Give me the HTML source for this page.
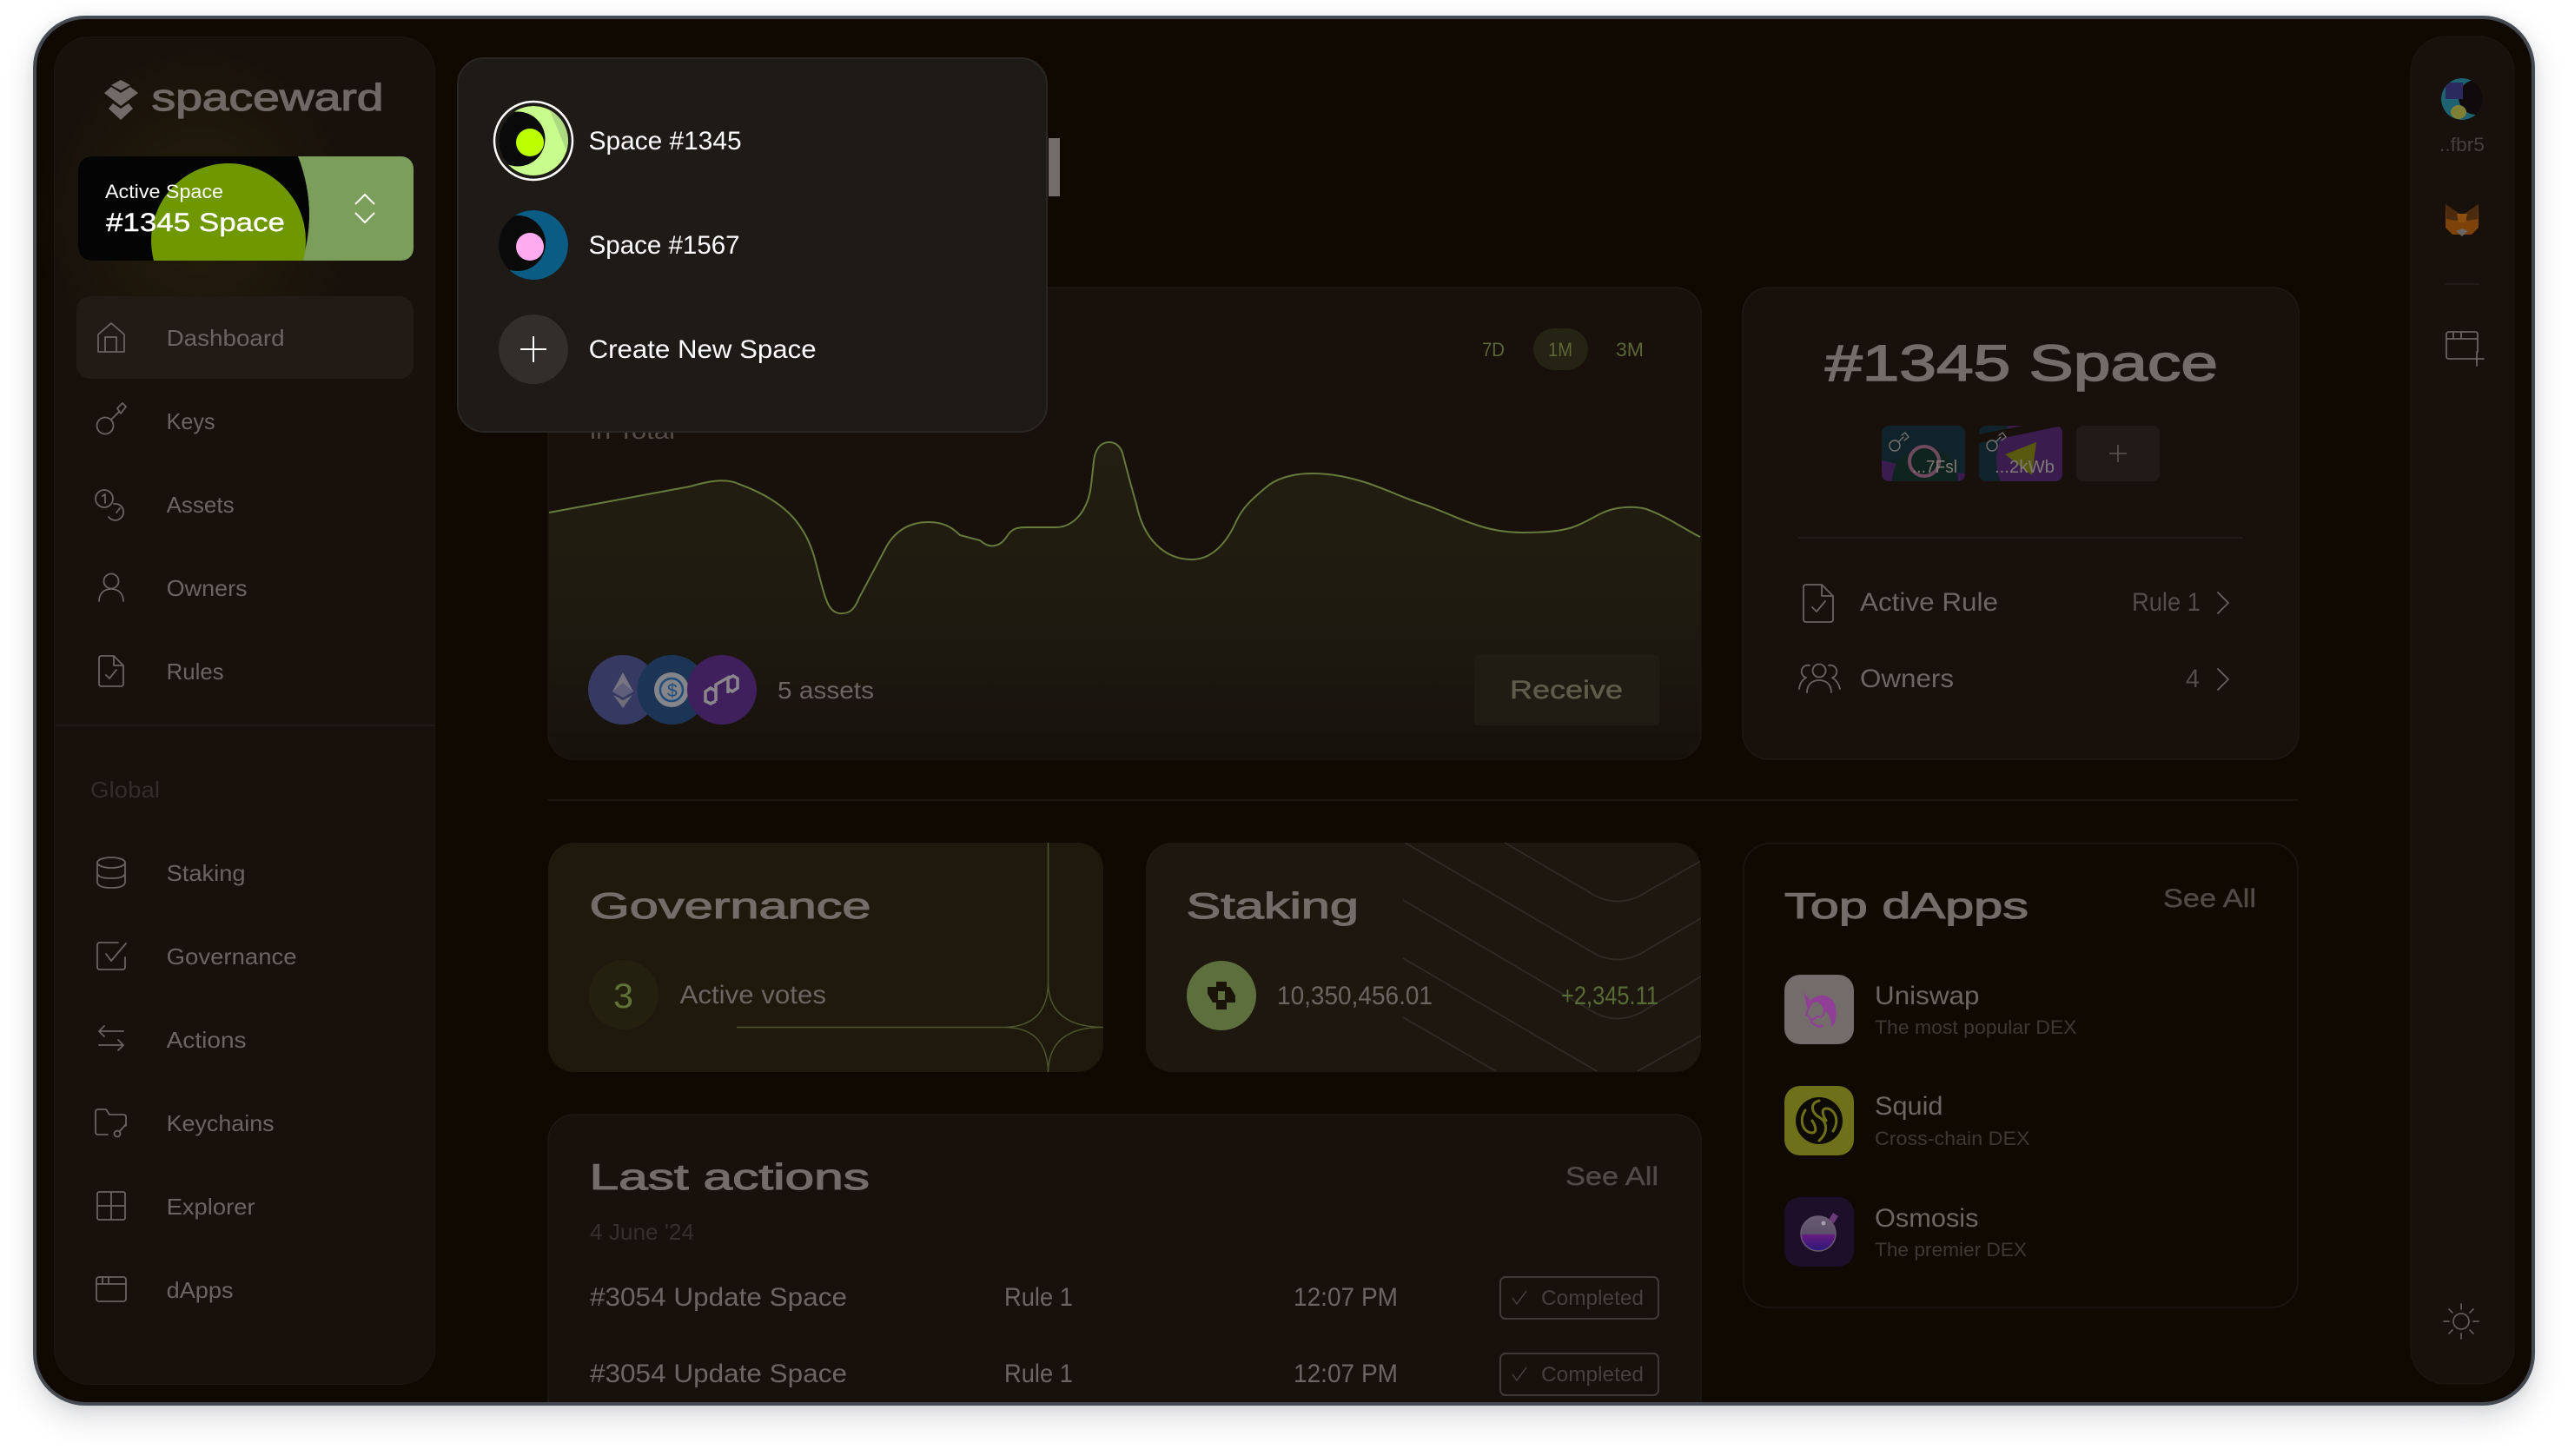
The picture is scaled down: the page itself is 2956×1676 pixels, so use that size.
<!DOCTYPE html>
<html lang="en"><head><meta charset="utf-8"><title>Spaceward</title>
<style>
html,body{margin:0;padding:0;background:#fff;width:2956px;height:1676px;overflow:hidden}
#sh{position:absolute;left:38px;top:18px;width:2880px;height:1600px;border-radius:60px;box-shadow:0 14px 34px rgba(30,35,45,.17),0 2px 12px rgba(30,40,60,.08)}
svg{position:absolute;left:0;top:0}
text{font-family:"Liberation Sans",sans-serif}
.n{font-size:26px;fill:#6b6461}
.b{font-size:30px;fill:#6c6562}
.h{font-size:42px;fill:#746c69;stroke:#746c69;stroke-width:1.1px}
.sa{font-size:30px;fill:#504a46}
.s{font-size:22px;fill:#3e3834}
.d{font-size:30px;fill:#fff}
.i{fill:none;stroke:#6a6360;stroke-width:1.8;stroke-linecap:round;stroke-linejoin:round}
.i2{fill:none;stroke:#5f5855;stroke-width:1.8;stroke-linecap:round;stroke-linejoin:round}
</style></head><body>
<div id="sh"></div>
<svg width="2956" height="1676" viewBox="0 0 2956 1676" xmlns="http://www.w3.org/2000/svg">
<defs>
<clipPath id="fr"><rect x="42" y="22" width="2872" height="1592" rx="56"/></clipPath>
<clipPath id="ac"><rect x="90" y="180" width="386" height="120" rx="14"/></clipPath>
<clipPath id="cc"><rect x="631" y="331" width="1327" height="543" rx="30"/></clipPath>
<clipPath id="gc"><rect x="631" y="970" width="639" height="264" rx="30"/></clipPath>
<clipPath id="stc"><rect x="1319" y="970" width="639" height="264" rx="30"/></clipPath>
<clipPath id="a1"><circle cx="614" cy="162" r="40"/></clipPath>
<clipPath id="a2"><circle cx="614" cy="282" r="40"/></clipPath>
<clipPath id="t1"><rect x="2166" y="490" width="96" height="64" rx="8"/></clipPath>
<clipPath id="t2"><rect x="2278" y="490" width="96" height="64" rx="8"/></clipPath>
<clipPath id="av"><circle cx="2834" cy="114" r="24"/></clipPath>
<linearGradient id="cf" x1="0" y1="0" x2="0" y2="1"><stop offset="0" stop-color="#221e11"/><stop offset=".55" stop-color="#1e1a10"/><stop offset="1" stop-color="#17110c"/></linearGradient>
<radialGradient id="gl" cx=".5" cy=".5" r=".5"><stop offset="0" stop-color="#251d0b"/><stop offset="1" stop-color="#251d0b" stop-opacity="0"/></radialGradient>
<linearGradient id="os" x1="0" y1="0" x2="0" y2="1"><stop offset="0" stop-color="#6a5a72"/><stop offset=".5" stop-color="#5a5068"/><stop offset=".55" stop-color="#651a80"/><stop offset="1" stop-color="#2a1a78"/></linearGradient>
</defs>
<rect x="38" y="18" width="2880" height="1600" rx="60" fill="#454a52"/>
<rect x="42" y="22" width="2872" height="1592" rx="56" fill="#100902"/>
<g clip-path="url(#fr)">

<!-- Sidebar -->
<rect x="62.5" y="42.5" width="438" height="1551" rx="40" fill="#17100b" stroke="#1c1610"/>
<ellipse cx="230" cy="250" rx="190" ry="210" fill="url(#gl)"/>
<polygon points="139,92 150,98 139,104 128,98" fill="#726a67"/>
<polygon points="120,107 128,100 139,107 150,100 159,107 139,122" fill="#726a67"/>
<polygon points="125,125 130,119 139,125 148,119 153,125 139,138" fill="#726a67"/>
<text x="174.500" y="127" font-size="44" fill="#6f6865" stroke="#6f6865" stroke-width="1.2" textLength="267" lengthAdjust="spacingAndGlyphs">spaceward</text>

<g clip-path="url(#ac)">
<rect x="89" y="180" width="387" height="120" fill="#7c9e5b"/>
<path d="M89 180H343Q366 240 348 300H89Z" fill="#040404"/>
<path d="M343 180Q366 240 348 300L343 300Q362 240 343 180Z" fill="#040404"/>
<circle cx="263" cy="277" r="89" fill="#6f9700"/>
</g>
<text x="121" y="228" font-size="22" fill="#fff" textLength="136" lengthAdjust="spacingAndGlyphs">Active Space</text>
<text x="122" y="266" font-size="30" fill="#fff" stroke="#fff" stroke-width=".4" textLength="206" lengthAdjust="spacingAndGlyphs">#1345 Space</text>
<path d="M409 235L420 224L431 235M409 245L420 256L431 245" fill="none" stroke="#fff" stroke-width="2"/>

<rect x="88" y="341" width="388" height="95" rx="16" fill="#221a15"/>
<path class="i" d="M113 405V385L128 372L143 385V405ZM121 405V388H134V405"/>
<text x="191.600" y="398" class="n" textLength="136" lengthAdjust="spacingAndGlyphs">Dashboard</text>

<circle class="i" cx="121" cy="490" r="9.5"/>
<path class="i" d="M128 483L137 474M135 470L141 464L145 468L139 476L135 470"/>
<text x="191.600" y="494" class="n" textLength="56" lengthAdjust="spacingAndGlyphs">Keys</text>

<circle class="i" cx="120" cy="574" r="10"/>
<path class="i" d="M118 571L121 569V579"/>
<path class="i" d="M131 580A9.5 9.5 0 1 1 125 595M138 585L134 590"/>
<text x="191.600" y="590" class="n" textLength="78" lengthAdjust="spacingAndGlyphs">Assets</text>

<circle class="i" cx="128" cy="669" r="8.5"/>
<path class="i" d="M114 692C114 683 120 678 128 678C136 678 142 683 142 692"/>
<text x="191.600" y="686" class="n" textLength="93" lengthAdjust="spacingAndGlyphs">Owners</text>

<path class="i" d="M131 755H117Q114 755 114 758V787Q114 790 117 790H139Q142 790 142 787V766ZM131 755V766H142M122 777L126 781L134 771"/>
<text x="191.600" y="782" class="n" textLength="66" lengthAdjust="spacingAndGlyphs">Rules</text>

<line x1="63" y1="835" x2="500" y2="835" stroke="#1f1915" stroke-width="2"/>
<text x="104" y="918" class="n" style="fill:#322d2a" textLength="80" lengthAdjust="spacingAndGlyphs">Global</text>

<ellipse class="i" cx="128" cy="993" rx="16" ry="6"/>
<path class="i" d="M112 993V1015Q112 1022 128 1022Q144 1022 144 1015V993M112 1005Q112 1011 128 1011Q144 1011 144 1005"/>
<text x="191.600" y="1014" class="n" textLength="91" lengthAdjust="spacingAndGlyphs">Staking</text>

<path class="i" d="M136 1085H115Q112 1085 112 1088V1113Q112 1116 115 1116H141Q144 1116 144 1113V1102M122 1098L128 1106L145 1086"/>
<text x="191.600" y="1110" class="n" textLength="150" lengthAdjust="spacingAndGlyphs">Governance</text>

<path class="i" d="M142 1187H114M120 1181L114 1187L120 1193M114 1203H142M136 1197L142 1203L136 1209"/>
<text x="191.600" y="1206" class="n" textLength="92" lengthAdjust="spacingAndGlyphs">Actions</text>

<path class="i" d="M124 1306H113Q110 1306 110 1303V1280Q110 1277 113 1277H122L126 1283H142Q145 1283 145 1286V1296"/>
<circle class="i" cx="135" cy="1305" r="3.5"/>
<path class="i" d="M138 1302L145 1294"/>
<text x="191.600" y="1302" class="n" textLength="124" lengthAdjust="spacingAndGlyphs">Keychains</text>

<rect class="i" x="112" y="1372" width="32" height="32" rx="2"/>
<path class="i" d="M128 1372V1404M112 1388H144"/>
<text x="191.600" y="1398" class="n" textLength="102" lengthAdjust="spacingAndGlyphs">Explorer</text>

<rect class="i" x="111" y="1470" width="34" height="28" rx="3"/>
<path class="i" d="M111 1478H145M118 1470V1478M125 1470V1478"/>
<text x="191.600" y="1494" class="n" textLength="77" lengthAdjust="spacingAndGlyphs">dApps</text>

<!-- header stub -->
<rect x="1207" y="159" width="13" height="67" fill="#746c69"/>

<!-- Chart card -->
<rect x="631" y="331" width="1327" height="543" rx="30" fill="#17100b" stroke="#1d1813" stroke-width="1.5"/>
<text x="679" y="505" class="n" style="fill:#544d49" textLength="98" lengthAdjust="spacingAndGlyphs">in Total</text>
<g clip-path="url(#cc)">
<path d="M632 590L794 560C815 554 835 550 850 557C900 575 925 600 937 640C945 670 947 680 951 690C955 702 962 707 970 706C980 706 985 698 989 688L1021 628C1033 608 1050 601 1069 601C1085 601 1095 606 1105 616L1128 622C1135 628 1140 629 1145 628C1152 627 1156 622 1160 616C1165 609 1170 607 1180 607L1215 607C1235 607 1250 590 1255 565C1258 545 1258 535 1260 525C1263 513 1270 509 1277 509C1285 509 1291 515 1293 525C1297 540 1302 560 1308 580C1316 620 1340 644 1372 644C1395 644 1412 625 1423 600C1430 585 1440 575 1461 558C1475 548 1495 545 1510 545C1535 545 1555 550 1574 556C1600 565 1620 575 1640 581C1665 590 1680 598 1696 603C1715 610 1735 613 1753 613C1775 613 1795 612 1810 607C1830 600 1840 590 1857 586C1870 583 1885 583 1895 586C1920 595 1940 610 1957 618V874H632Z" fill="url(#cf)"/>
<path d="M632 590L794 560C815 554 835 550 850 557C900 575 925 600 937 640C945 670 947 680 951 690C955 702 962 707 970 706C980 706 985 698 989 688L1021 628C1033 608 1050 601 1069 601C1085 601 1095 606 1105 616L1128 622C1135 628 1140 629 1145 628C1152 627 1156 622 1160 616C1165 609 1170 607 1180 607L1215 607C1235 607 1250 590 1255 565C1258 545 1258 535 1260 525C1263 513 1270 509 1277 509C1285 509 1291 515 1293 525C1297 540 1302 560 1308 580C1316 620 1340 644 1372 644C1395 644 1412 625 1423 600C1430 585 1440 575 1461 558C1475 548 1495 545 1510 545C1535 545 1555 550 1574 556C1600 565 1620 575 1640 581C1665 590 1680 598 1696 603C1715 610 1735 613 1753 613C1775 613 1795 612 1810 607C1830 600 1840 590 1857 586C1870 583 1885 583 1895 586C1920 595 1940 610 1957 618" fill="none" stroke="#667a3c" stroke-width="2"/>
</g>
<rect x="1765" y="378" width="63" height="48" rx="24" fill="#252313"/>
<g font-size="22" fill="#5c6636">
<text x="1706" y="410" textLength="26" lengthAdjust="spacingAndGlyphs">7D</text>
<text x="1782" y="410" textLength="28" lengthAdjust="spacingAndGlyphs">1M</text>
<text x="1860" y="410" textLength="32" lengthAdjust="spacingAndGlyphs">3M</text>
</g>
<circle cx="717" cy="794" r="40" fill="#363a63"/>
<polygon points="717,774 729,796 717,803 705,796" fill="#77757f"/>
<polygon points="706,800 717,806 728,800 717,815" fill="#6f6d79"/>
<polygon points="717,786 729,796 717,803 705,796" fill="#5f5f7c"/>
<circle cx="773.5" cy="794" r="40" fill="#1c3557"/>
<circle cx="773" cy="794" r="20" fill="#858488"/>
<circle cx="773" cy="794" r="13" fill="none" stroke="#1f4e7e" stroke-width="2.500"/>
<text x="768" y="802" font-size="21" fill="#1f4e7e">$</text>
<circle cx="831" cy="794" r="40" fill="#3f1f5c"/>
<path d="M838 781L844 778L849 781V792L843 796L838 793M824 807L818 810L812 807V796L818 792L823 795M824 807V788L838 780V798" fill="none" stroke="#8a868c" stroke-width="3.500"/>
<text x="895" y="804" style="font-size:28px;fill:#6c6562" textLength="111" lengthAdjust="spacingAndGlyphs">5 assets</text>
<rect x="1697" y="754" width="213" height="81" rx="4" fill="#1f1d13"/>
<text x="1738" y="804" font-size="30" fill="#5f5c4c" stroke="#5f5c4c" stroke-width=".5" textLength="130" lengthAdjust="spacingAndGlyphs">Receive</text>

<!-- Space card -->
<rect x="2006" y="331" width="640" height="543" rx="30" fill="#17100b" stroke="#1d1813" stroke-width="1.5"/>
<text x="2101" y="438" font-size="58" fill="#746c69" stroke="#746c69" stroke-width="1.5" textLength="452" lengthAdjust="spacingAndGlyphs">#1345 Space</text>
<g clip-path="url(#t1)">
<rect x="2166" y="490" width="96" height="64" fill="#10232a"/>
<path d="M2166 530L2210 540L2262 545V554H2166Z" fill="#3a1c4f"/>
<circle cx="2216" cy="553" r="38" fill="#10241f"/>
<circle cx="2215" cy="531" r="17" fill="none" stroke="#6f4a5f" stroke-width="4"/>
</g>
<g clip-path="url(#t2)">
<rect x="2278" y="490" width="96" height="64" fill="#10232a"/>
<circle cx="2360" cy="530" r="62" fill="#3a1c4f"/>
<polygon points="2278,510 2374,490 2374,481 2278,500" fill="#17100b"/>
<polygon points="2308,523 2344,509 2339,547" fill="#59580f"/>
</g>
<g class="i" style="stroke-width:1.4;stroke:#74706c">
<circle cx="2181" cy="513" r="6"/><path d="M2185 509L2191 503M2189 501L2193 498L2197 503L2192 507"/>
<circle cx="2293" cy="513" r="6"/><path d="M2297 509L2303 503M2301 501L2305 498L2309 503L2304 507"/>
</g>
<text x="2201" y="544" font-size="20" fill="#807a76" textLength="52" lengthAdjust="spacingAndGlyphs">...7Fsl</text>
<text x="2296" y="544" font-size="20" fill="#807a76" textLength="69" lengthAdjust="spacingAndGlyphs">...2kWb</text>
<rect x="2390" y="490" width="96" height="64" rx="8" fill="#211a16"/>
<path d="M2438 512V532M2428 522H2448" stroke="#5c5552" stroke-width="1.6"/>
<line x1="2070" y1="619" x2="2582" y2="619" stroke="#211b17" stroke-width="2"/>
<path class="i" d="M2097 673H2079Q2076 673 2076 676V713Q2076 716 2079 716H2107Q2110 716 2110 713V686ZM2097 673V686H2110M2086 699L2091 704L2101 692"/>
<text x="2141" y="703" class="b" textLength="159" lengthAdjust="spacingAndGlyphs">Active Rule</text>
<text x="2454" y="703" class="b" style="fill:#534c48" textLength="79" lengthAdjust="spacingAndGlyphs">Rule 1</text>
<path class="i" d="M2553 682L2565 694L2553 706"/>
<g class="i"><circle cx="2094" cy="772" r="7.5"/><path d="M2080 797C2080 788 2086 783 2094 783C2102 783 2108 788 2108 797"/><path d="M2083 766A7 7 0 0 0 2079 780Q2072 784 2071 793M2105 766A7 7 0 0 1 2109 780Q2116 784 2118 793"/></g>
<text x="2141" y="791" class="b" textLength="108" lengthAdjust="spacingAndGlyphs">Owners</text>
<text x="2516" y="791" class="b" style="fill:#534c48" textLength="16" lengthAdjust="spacingAndGlyphs">4</text>
<path class="i" d="M2553 770L2565 782L2553 794"/>

<line x1="630" y1="921" x2="2645" y2="921" stroke="#1c1611" stroke-width="2"/>

<!-- Governance -->
<rect x="631" y="970" width="639" height="264" rx="30" fill="#1e180d"/>
<g clip-path="url(#gc)" fill="none" stroke="#4c552c" stroke-width="1.5">
<path d="M1206.5 970V1130M848 1182.5H1155"/>
<path d="M1206.5 1130Q1206.5 1182 1155 1182.5Q1206.5 1182 1206.5 1236Q1206.5 1182 1270 1182.5Q1206.5 1182 1206.5 1130Z"/>
</g>
<text x="678.500" y="1057" class="h" textLength="324" lengthAdjust="spacingAndGlyphs">Governance</text>
<circle cx="718" cy="1145" r="40" fill="#232010"/>
<text x="706" y="1160" font-size="40" fill="#5f7337" textLength="23" lengthAdjust="spacingAndGlyphs">3</text>
<text x="782.500" y="1155" class="b" textLength="168.500" lengthAdjust="spacingAndGlyphs">Active votes</text>

<!-- Staking -->
<rect x="1319" y="970" width="639" height="264" rx="30" fill="#1e1710"/>
<g clip-path="url(#stc)" fill="none" stroke="#302a24" stroke-width="1.8">
<path d="M1732 970L1826 1025Q1862 1050 1898 1025L1958 991"/>
<path d="M1617 970L1826 1092Q1862 1117 1898 1092L1958 1057"/>
<path d="M1615 1036L1826 1160Q1862 1185 1898 1160L1958 1124"/>
<path d="M1615 1103L1838 1233M1885 1233L1958 1192"/>
<path d="M1615 1171L1722 1233"/>
</g>
<text x="1365.500" y="1057" class="h" textLength="198.500" lengthAdjust="spacingAndGlyphs">Staking</text>
<circle cx="1406" cy="1146" r="40" fill="#5d6f3c"/>
<path d="M1400 1130H1412V1136L1416 1136L1422 1146V1154H1412V1162H1400V1154L1396 1154L1390 1144V1136H1400ZM1402 1141V1151H1410V1141Z" fill="#1a1308" fill-rule="evenodd"/>
<text x="1470" y="1156" class="b" textLength="179" lengthAdjust="spacingAndGlyphs">10,350,456.01</text>
<text x="1797" y="1156" class="b" style="fill:#566b35" textLength="112" lengthAdjust="spacingAndGlyphs">+2,345.11</text>

<!-- Top dApps -->
<rect x="2007" y="971" width="638" height="534" rx="30" fill="none" stroke="#1a1410" stroke-width="2"/>
<text x="2054" y="1057" class="h" textLength="281" lengthAdjust="spacingAndGlyphs">Top dApps</text>
<text x="2490" y="1044" class="sa" stroke="#504a46" stroke-width=".4" textLength="107" lengthAdjust="spacingAndGlyphs">See All</text>
<rect x="2054" y="1122" width="80" height="80" rx="18" fill="#736c6a"/>
<path d="M2076 1142L2084 1152C2090 1145 2102 1144 2108 1150C2114 1156 2115 1168 2112 1178L2108 1182C2108 1174 2106 1168 2102 1164L2084 1176Z" fill="#8f3f96"/>
<path d="M2086 1154C2092 1150 2098 1154 2100 1162C2100 1170 2096 1172 2092 1170L2086 1174L2079 1168C2081 1160 2084 1158 2086 1154Z" fill="#736c6a" stroke="#8f3f96" stroke-width="2"/>
<path d="M2084 1176C2090 1180 2094 1184 2098 1180" fill="none" stroke="#8f3f96" stroke-width="2.500"/>
<text x="2158" y="1156" class="b" textLength="120.500" lengthAdjust="spacingAndGlyphs">Uniswap</text>
<text x="2158" y="1190" class="s" textLength="232.500" lengthAdjust="spacingAndGlyphs">The most popular DEX</text>
<rect x="2054" y="1250" width="80" height="80" rx="18" fill="#6f711a"/>
<circle cx="2094" cy="1290" r="27" fill="#0d0a04"/>
<g fill="none" stroke="#6f711a" stroke-width="3" stroke-linecap="round">
<path d="M2094 1267C2082 1270 2086 1282 2094 1286C2102 1290 2106 1302 2094 1313"/>
<path d="M2078 1278C2070 1290 2076 1304 2086 1304C2092 1304 2090 1296 2086 1290"/>
<path d="M2110 1302C2118 1290 2112 1276 2102 1276C2096 1276 2098 1284 2102 1290"/>
</g>
<text x="2158" y="1283" class="b" textLength="78.500" lengthAdjust="spacingAndGlyphs">Squid</text>
<text x="2158" y="1318" class="s" textLength="178.500" lengthAdjust="spacingAndGlyphs">Cross-chain DEX</text>
<rect x="2054" y="1378" width="80" height="80" rx="18" fill="#1d0f2a"/>
<circle cx="2093" cy="1420" r="20" fill="url(#os)" stroke="#6b5a72" stroke-width="1.5"/>
<path d="M2105 1404L2110 1396L2116 1400L2111 1408Z" fill="#6c3a78"/>
<circle cx="2099" cy="1408" r="2.500" fill="#a89cae"/>
<text x="2158" y="1412" class="b" textLength="119.500" lengthAdjust="spacingAndGlyphs">Osmosis</text>
<text x="2158" y="1446" class="s" textLength="175" lengthAdjust="spacingAndGlyphs">The premier DEX</text>

<!-- Last actions -->
<rect x="631" y="1283" width="1327" height="400" rx="30" fill="#17100b" stroke="#1d1813" stroke-width="1.5"/>
<text x="678.500" y="1369" class="h" textLength="322.500" lengthAdjust="spacingAndGlyphs">Last actions</text>
<text x="1802" y="1364" class="sa" stroke="#504a46" stroke-width=".4" textLength="107" lengthAdjust="spacingAndGlyphs">See All</text>
<text x="679" y="1427" class="n" style="fill:#35302c" textLength="120" lengthAdjust="spacingAndGlyphs">4 June '24</text>
<g class="b">
<text x="679" y="1503" textLength="296" lengthAdjust="spacingAndGlyphs">#3054 Update Space</text>
<text x="1156" y="1503" textLength="79" lengthAdjust="spacingAndGlyphs">Rule 1</text>
<text x="1489" y="1503" textLength="120" lengthAdjust="spacingAndGlyphs">12:07 PM</text>
<text x="679" y="1591" textLength="296" lengthAdjust="spacingAndGlyphs">#3054 Update Space</text>
<text x="1156" y="1591" textLength="79" lengthAdjust="spacingAndGlyphs">Rule 1</text>
<text x="1489" y="1591" textLength="120" lengthAdjust="spacingAndGlyphs">12:07 PM</text>
</g>
<rect x="1727" y="1470" width="182" height="48" rx="6" fill="none" stroke="#3f3a36" stroke-width="2"/>
<rect x="1727" y="1558" width="182" height="48" rx="6" fill="none" stroke="#3f3a36" stroke-width="2"/>
<path d="M1741 1494L1746 1501L1757 1486M1741 1582L1746 1589L1757 1574" fill="none" stroke="#45403b" stroke-width="1.5"/>
<text x="1774" y="1502" font-size="24" fill="#45403b" textLength="118" lengthAdjust="spacingAndGlyphs">Completed</text>
<text x="1774" y="1590" font-size="24" fill="#45403b" textLength="118" lengthAdjust="spacingAndGlyphs">Completed</text>

<!-- Right rail -->
<rect x="2775" y="42" width="119" height="1551" rx="40" fill="#17100b" stroke="#1c1610"/>
<g clip-path="url(#av)">
<circle cx="2834" cy="114" r="24" fill="#1e6372"/>
<circle cx="2850" cy="112" r="20" fill="#100a0c"/>
<rect x="2815" y="95" width="20" height="19" fill="#2b2a5e"/>
<ellipse cx="2830" cy="129" rx="9" ry="8" fill="#7f7f35"/>
</g>
<text x="2808" y="174" class="s" style="fill:#46403c" textLength="52" lengthAdjust="spacingAndGlyphs">..fbr5</text>
<polygon points="2815,235 2834,248 2853,235 2853,262 2845,270 2823,270 2815,262" fill="#7d4208"/>
<polygon points="2815,235 2834,248 2828,254 2816,252" fill="#4c2a0d"/>
<polygon points="2853,235 2834,248 2840,254 2852,252" fill="#4c2a0d"/>
<polygon points="2828,246 2840,246 2838,256 2830,256" fill="#8c4f10"/>
<polygon points="2827,266 2834,263 2841,266 2834,272" fill="#6c6561"/>
<line x1="2814" y1="327" x2="2854" y2="327" stroke="#211b17" stroke-width="2"/>
<path class="i" d="M2843 413H2819Q2816 413 2816 410V385Q2816 382 2819 382H2849Q2852 382 2852 385V405M2816 390H2852M2824 382V390M2833 382V390M2851 405V421M2843 413H2859"/>
<circle class="i2" cx="2833" cy="1521" r="9"/>
<path class="i2" d="M2833 1501V1507M2833 1535V1541M2813 1521H2819M2847 1521H2853M2819 1507L2823 1511M2847 1507L2843 1511M2819 1535L2823 1531M2847 1535L2843 1531"/>

<!-- Dropdown -->
<rect x="527" y="67" width="678" height="430" rx="30" fill="#1e1a16" stroke="#2a2623" stroke-width="2"/>
<circle cx="614" cy="162" r="45" fill="none" stroke="#fff" stroke-width="2.500"/>
<g clip-path="url(#a1)">
<circle cx="614" cy="162" r="40" fill="#c8fd8d"/>
<polygon points="630,120 660,120 660,185 653,176" fill="#aeda82"/>
<circle cx="596" cy="160" r="31.500" fill="#0a0a0a"/>
</g>
<circle cx="610" cy="164" r="16" fill="#bbff00"/>
<g clip-path="url(#a2)">
<circle cx="614" cy="282" r="40" fill="#0a5c85"/>
<circle cx="596" cy="280" r="32" fill="#0a0a0a"/>
</g>
<circle cx="610" cy="284" r="16" fill="#ffabef"/>
<circle cx="614" cy="402" r="40" fill="#322e2b"/>
<path d="M614 387V417M599 402H629" stroke="#fff" stroke-width="2"/>
<text x="677.600" y="172" class="d" textLength="176" lengthAdjust="spacingAndGlyphs">Space #1345</text>
<text x="677.600" y="292" class="d" textLength="174" lengthAdjust="spacingAndGlyphs">Space #1567</text>
<text x="677.600" y="412" class="d" textLength="262" lengthAdjust="spacingAndGlyphs">Create New Space</text>
</g>
</svg>
</body></html>
